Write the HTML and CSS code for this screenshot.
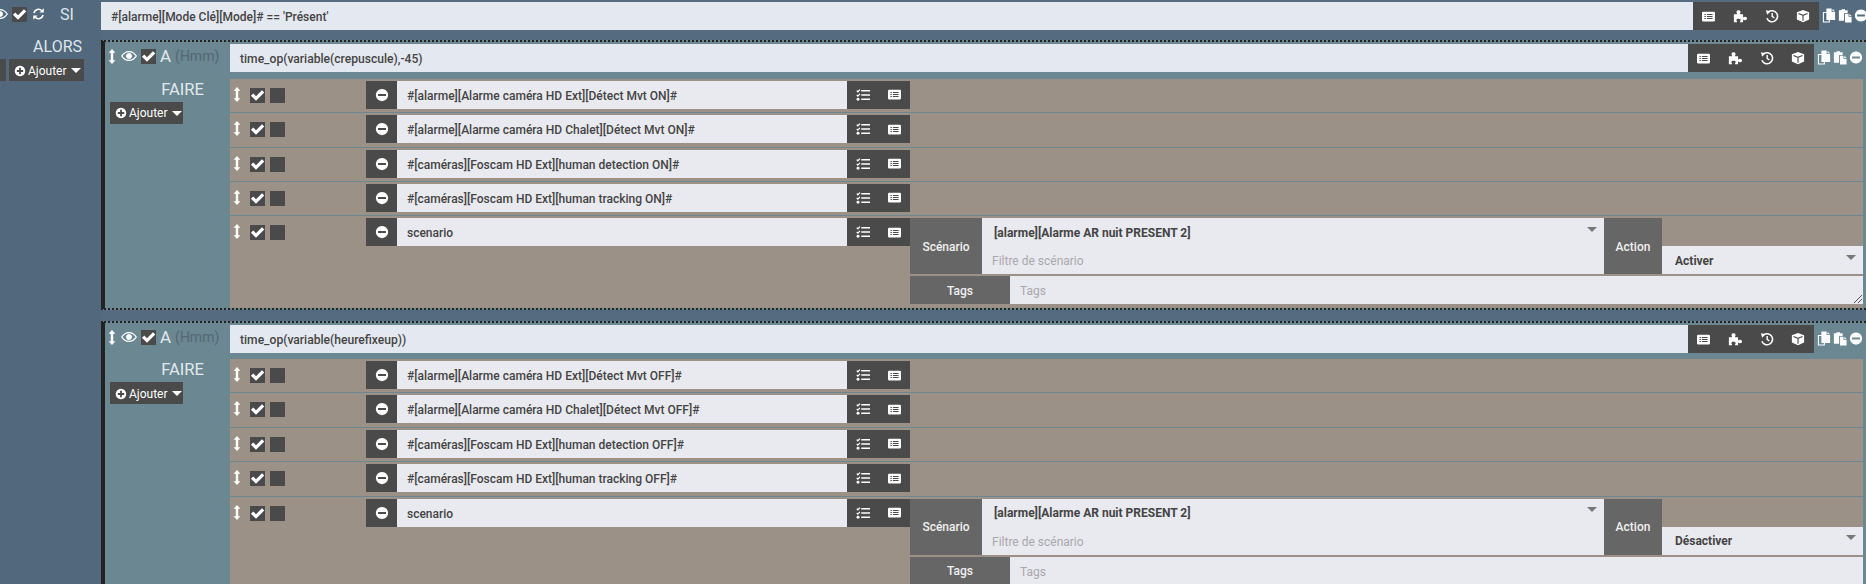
FILE: index.html
```html
<!DOCTYPE html>
<html lang="fr">
<head>
<meta charset="utf-8">
<title>Scénario</title>
<link rel="stylesheet" href="styles.css">
</head>
<body>
<svg class="sprite" xmlns="http://www.w3.org/2000/svg">
  <symbol id="i-check" viewBox="0 0 16 16"><path d="M1.800 8.200 4 6l2.600 2.600L12.200 3l2.200 2.200-7.800 7.800z"/></symbol>
  <symbol id="i-arrows" viewBox="0 0 8 16"><path d="M4 0l3.600 4H5.300v8h2.300L4 16 .4 12h2.300V4H.4z"/></symbol>
  <symbol id="i-eye" viewBox="0 0 16 16"><path fill-rule="evenodd" d="M8 3C4.600 3 1.800 5 0 8c1.800 3 4.600 5 8 5s6.200-2 8-5c-1.800-3-4.600-5-8-5zM8 4.200c2.800 0 5 1.600 6.600 3.800-1.600 2.200-3.800 3.800-6.600 3.800S3 10.200 1.400 8C3 5.800 5.200 4.200 8 4.200zM8 5a3 3 0 1 0 .01 0z"/></symbol>
  <symbol id="i-refresh" viewBox="0 0 16 16"><path d="M2.500 7A5.600 5.600 0 0 1 12.300 4.200" fill="none" stroke="currentColor" stroke-width="2"/><path d="M14.500 1v5.300H9.200z"/><path d="M13.500 9A5.600 5.600 0 0 1 3.700 11.800" fill="none" stroke="currentColor" stroke-width="2"/><path d="M1.500 15V9.700h5.300z"/></symbol>
  <symbol id="i-list" viewBox="0 0 16 16"><path fill-rule="evenodd" d="M1.500 2h13A1.500 1.500 0 0 1 16 3.500v9a1.500 1.500 0 0 1-1.500 1.500h-13A1.500 1.500 0 0 1 0 12.500v-9A1.500 1.500 0 0 1 1.500 2zM3 4.800v1.400h1.700V4.800zM6 4.800v1.400h7V4.800zM3 7.300v1.400h1.700V7.300zM6 7.300v1.400h7V7.300zM3 9.800v1.400h1.700V9.800zM6 9.800v1.400h7V9.800z"/></symbol>
  <symbol id="i-puzzle" viewBox="0 0 16 16"><path d="M1 6h3.600c.4-.8-.6-1.300-.6-2.700C4 2.200 5 1.500 6.300 1.500s2.300.7 2.300 1.800c0 1.400-1 1.900-.6 2.700h3.500v3.300c.8.400 1.300-.5 2.400-.5 1.200 0 2.100.9 2.100 2s-.9 2-2.100 2c-1.100 0-1.600-.9-2.400-.5V15H8c-.4-.8.700-1.200.7-2.400 0-1.100-1.100-1.600-2.400-1.600s-2.400.5-2.400 1.600c0 1.200 1.100 1.600.7 2.400H1z"/></symbol>
  <symbol id="i-history" viewBox="0 0 16 16"><path d="M4 3.400A6.300 6.300 0 1 1 2.200 10.600" fill="none" stroke="currentColor" stroke-width="1.800"/><path d="M1 1.500l5.200 1-3.700 4z"/><path d="M8.200 4.500v4l2.500 1.800" fill="none" stroke="currentColor" stroke-width="1.600"/></symbol>
  <symbol id="i-cube" viewBox="0 0 16 16"><path d="M8 1l7 2.700v8.400L8 15l-7-2.900V3.700z"/><path d="M2.800 5.200 8 7.300l5.200-2.100M8 7.300v6" fill="none" stroke="#4a4a4a" stroke-width="1.300"/></symbol>
  <symbol id="i-copy" viewBox="0 0 16 16"><path fill-rule="evenodd" d="M5 0h6v4h4v9H9V16H1V4h4zM2.200 5.200v9.600h5.600V13H5V5.200z"/><path d="M12 .5 15 3h-3z"/></symbol>
  <symbol id="i-paste" viewBox="0 0 16 16"><path d="M1 2h3V.8h4V2h3v3H7v9H1z"/><path d="M8 6h4v3.500h3.500V16H8z"/><path d="M13 6l2.500 2.500H13z"/></symbol>
  <symbol id="i-minus" viewBox="0 0 16 16"><path fill-rule="evenodd" d="M8 1a7 7 0 1 1-.01 0zM3.500 6.800v2.400h9V6.800z"/></symbol>
  <symbol id="i-plus" viewBox="0 0 16 16"><path fill-rule="evenodd" d="M8 1a7 7 0 1 1-.01 0zM6.800 3.800v3H3.800v2.400h3v3h2.400v-3h3V6.800h-3v-3z"/></symbol>
  <symbol id="i-tasks" viewBox="0 0 16 16"><path d="M6 2.200h10v1.800H6zM6 7.100h10v1.800H6zM6 12h10v1.800H6z"/><path d="M.8 3l1.300 1.300L4.500 1.800" fill="none" stroke="currentColor" stroke-width="1.400"/><path d="M.8 7.900l1.300 1.300 2.400-2.500" fill="none" stroke="currentColor" stroke-width="1.400"/><circle cx="2.300" cy="12.900" r="1.700"/></symbol>
</svg>

<div class="page">
  <aside class="sidebar">
    <div class="si-row">
      <svg class="ic ic-eye ic-eye-clip"><use href="#i-eye"/></svg>
      <span class="box"><svg class="ic ic-check"><use href="#i-check"/></svg></span>
      <svg class="ic ic-refresh"><use href="#i-refresh"/></svg>
      <span class="si-label">SI</span>
    </div>
    <div class="alors">ALORS</div>
    <div class="alors-actions">
      <span class="stub"></span>
      <button class="add"><svg class="ic ic-plus"><use href="#i-plus"/></svg>Ajouter<span class="caret"></span></button>
    </div>
  </aside>

  <main class="main">
    <div class="si-bar">
      <div class="cond">#[alarme][Mode Clé][Mode]# == 'Présent'</div>
      <div class="btns">
        <span class="btn"><svg class="ic ic-btn ic-list"><use href="#i-list"/></svg></span>
        <span class="btn"><svg class="ic ic-btn"><use href="#i-puzzle"/></svg></span>
        <span class="btn"><svg class="ic ic-btn"><use href="#i-history"/></svg></span>
        <span class="btn"><svg class="ic ic-btn"><use href="#i-cube"/></svg></span>
      </div>
      <div class="tools tools-si">
        <svg class="ic ic-tool"><use href="#i-copy"/></svg>
        <svg class="ic ic-tool"><use href="#i-paste"/></svg>
        <svg class="ic ic-tool"><use href="#i-minus"/></svg>
      </div>
    </div>

    <section class="block">
      <div class="block-head">
        <div class="head-left">
          <svg class="ic ic-arrows"><use href="#i-arrows"/></svg>
          <svg class="ic ic-eye"><use href="#i-eye"/></svg>
          <span class="box"><svg class="ic ic-check"><use href="#i-check"/></svg></span>
          <span class="a-label">A</span><span class="hmm">(Hmm)</span>
        </div>
        <div class="cond cond-block">time_op(variable(crepuscule),-45)</div>
        <div class="btns">
          <span class="btn"><svg class="ic ic-btn ic-list"><use href="#i-list"/></svg></span>
          <span class="btn"><svg class="ic ic-btn"><use href="#i-puzzle"/></svg></span>
          <span class="btn"><svg class="ic ic-btn"><use href="#i-history"/></svg></span>
          <span class="btn"><svg class="ic ic-btn"><use href="#i-cube"/></svg></span>
        </div>
        <div class="tools">
          <svg class="ic ic-tool"><use href="#i-copy"/></svg>
          <svg class="ic ic-tool"><use href="#i-paste"/></svg>
          <svg class="ic ic-tool"><use href="#i-minus"/></svg>
        </div>
      </div>
      <div class="block-body">
        <div class="faire-col">
          <div class="faire">FAIRE</div>
          <button class="add"><svg class="ic ic-plus"><use href="#i-plus"/></svg>Ajouter<span class="caret"></span></button>
        </div>
        <div class="actions">
          <div class="row">
            <svg class="ic ic-arrows"><use href="#i-arrows"/></svg>
            <span class="box"><svg class="ic ic-check"><use href="#i-check"/></svg></span><span class="box box-second"></span>
            <span class="del"><svg class="ic ic-del"><use href="#i-minus"/></svg></span>
            <div class="cmd">#[alarme][Alarme caméra HD Ext][Détect Mvt ON]#</div>
            <div class="cmd-btns"><span class="btn2"><svg class="ic ic-btn"><use href="#i-tasks"/></svg></span><span class="btn2"><svg class="ic ic-btn ic-list"><use href="#i-list"/></svg></span></div>
          </div>
          <div class="row">
            <svg class="ic ic-arrows"><use href="#i-arrows"/></svg>
            <span class="box"><svg class="ic ic-check"><use href="#i-check"/></svg></span><span class="box box-second"></span>
            <span class="del"><svg class="ic ic-del"><use href="#i-minus"/></svg></span>
            <div class="cmd">#[alarme][Alarme caméra HD Chalet][Détect Mvt ON]#</div>
            <div class="cmd-btns"><span class="btn2"><svg class="ic ic-btn"><use href="#i-tasks"/></svg></span><span class="btn2"><svg class="ic ic-btn ic-list"><use href="#i-list"/></svg></span></div>
          </div>
          <div class="row">
            <svg class="ic ic-arrows"><use href="#i-arrows"/></svg>
            <span class="box"><svg class="ic ic-check"><use href="#i-check"/></svg></span><span class="box box-second"></span>
            <span class="del"><svg class="ic ic-del"><use href="#i-minus"/></svg></span>
            <div class="cmd">#[caméras][Foscam HD Ext][human detection ON]#</div>
            <div class="cmd-btns"><span class="btn2"><svg class="ic ic-btn"><use href="#i-tasks"/></svg></span><span class="btn2"><svg class="ic ic-btn ic-list"><use href="#i-list"/></svg></span></div>
          </div>
          <div class="row">
            <svg class="ic ic-arrows"><use href="#i-arrows"/></svg>
            <span class="box"><svg class="ic ic-check"><use href="#i-check"/></svg></span><span class="box box-second"></span>
            <span class="del"><svg class="ic ic-del"><use href="#i-minus"/></svg></span>
            <div class="cmd">#[caméras][Foscam HD Ext][human tracking ON]#</div>
            <div class="cmd-btns"><span class="btn2"><svg class="ic ic-btn"><use href="#i-tasks"/></svg></span><span class="btn2"><svg class="ic ic-btn ic-list"><use href="#i-list"/></svg></span></div>
          </div>
          <div class="row row-last">
            <svg class="ic ic-arrows"><use href="#i-arrows"/></svg>
            <span class="box"><svg class="ic ic-check"><use href="#i-check"/></svg></span><span class="box box-second"></span>
            <span class="del"><svg class="ic ic-del"><use href="#i-minus"/></svg></span>
            <div class="cmd">scenario</div>
            <div class="cmd-btns"><span class="btn2"><svg class="ic ic-btn"><use href="#i-tasks"/></svg></span><span class="btn2"><svg class="ic ic-btn ic-list"><use href="#i-list"/></svg></span></div>
            <div class="options">
              <div class="opt-line">
                <div class="opt-label opt-scen">Scénario</div>
                <div class="opt-value">
                  <div class="select"><b>[alarme][Alarme AR nuit PRESENT 2]</b><span class="caret caret-gray"></span></div>
                  <div class="placeholder">Filtre de scénario</div>
                </div>
                <div class="opt-label opt-action">Action</div>
                <div class="opt-action-value">
                  <div class="select select-action"><b>Activer</b><span class="caret caret-gray"></span></div>
                </div>
              </div>
              <div class="opt-line opt-tags">
                <div class="opt-label opt-tag-label">Tags</div>
                <div class="placeholder tags-input">Tags<svg class="grip" viewBox="0 0 8 8"><path d="M0 8 8 0M4 8l4-4" stroke="#555" stroke-width="1" fill="none"/></svg></div>
              </div>
            </div>
          </div>
        </div>
      </div>
    </section>

    <section class="block block-two">
      <div class="block-head">
        <div class="head-left">
          <svg class="ic ic-arrows"><use href="#i-arrows"/></svg>
          <svg class="ic ic-eye"><use href="#i-eye"/></svg>
          <span class="box"><svg class="ic ic-check"><use href="#i-check"/></svg></span>
          <span class="a-label">A</span><span class="hmm">(Hmm)</span>
        </div>
        <div class="cond cond-block">time_op(variable(heurefixeup))</div>
        <div class="btns">
          <span class="btn"><svg class="ic ic-btn ic-list"><use href="#i-list"/></svg></span>
          <span class="btn"><svg class="ic ic-btn"><use href="#i-puzzle"/></svg></span>
          <span class="btn"><svg class="ic ic-btn"><use href="#i-history"/></svg></span>
          <span class="btn"><svg class="ic ic-btn"><use href="#i-cube"/></svg></span>
        </div>
        <div class="tools">
          <svg class="ic ic-tool"><use href="#i-copy"/></svg>
          <svg class="ic ic-tool"><use href="#i-paste"/></svg>
          <svg class="ic ic-tool"><use href="#i-minus"/></svg>
        </div>
      </div>
      <div class="block-body">
        <div class="faire-col">
          <div class="faire">FAIRE</div>
          <button class="add"><svg class="ic ic-plus"><use href="#i-plus"/></svg>Ajouter<span class="caret"></span></button>
        </div>
        <div class="actions">
          <div class="row">
            <svg class="ic ic-arrows"><use href="#i-arrows"/></svg>
            <span class="box"><svg class="ic ic-check"><use href="#i-check"/></svg></span><span class="box box-second"></span>
            <span class="del"><svg class="ic ic-del"><use href="#i-minus"/></svg></span>
            <div class="cmd">#[alarme][Alarme caméra HD Ext][Détect Mvt OFF]#</div>
            <div class="cmd-btns"><span class="btn2"><svg class="ic ic-btn"><use href="#i-tasks"/></svg></span><span class="btn2"><svg class="ic ic-btn ic-list"><use href="#i-list"/></svg></span></div>
          </div>
          <div class="row">
            <svg class="ic ic-arrows"><use href="#i-arrows"/></svg>
            <span class="box"><svg class="ic ic-check"><use href="#i-check"/></svg></span><span class="box box-second"></span>
            <span class="del"><svg class="ic ic-del"><use href="#i-minus"/></svg></span>
            <div class="cmd">#[alarme][Alarme caméra HD Chalet][Détect Mvt OFF]#</div>
            <div class="cmd-btns"><span class="btn2"><svg class="ic ic-btn"><use href="#i-tasks"/></svg></span><span class="btn2"><svg class="ic ic-btn ic-list"><use href="#i-list"/></svg></span></div>
          </div>
          <div class="row">
            <svg class="ic ic-arrows"><use href="#i-arrows"/></svg>
            <span class="box"><svg class="ic ic-check"><use href="#i-check"/></svg></span><span class="box box-second"></span>
            <span class="del"><svg class="ic ic-del"><use href="#i-minus"/></svg></span>
            <div class="cmd">#[caméras][Foscam HD Ext][human detection OFF]#</div>
            <div class="cmd-btns"><span class="btn2"><svg class="ic ic-btn"><use href="#i-tasks"/></svg></span><span class="btn2"><svg class="ic ic-btn ic-list"><use href="#i-list"/></svg></span></div>
          </div>
          <div class="row">
            <svg class="ic ic-arrows"><use href="#i-arrows"/></svg>
            <span class="box"><svg class="ic ic-check"><use href="#i-check"/></svg></span><span class="box box-second"></span>
            <span class="del"><svg class="ic ic-del"><use href="#i-minus"/></svg></span>
            <div class="cmd">#[caméras][Foscam HD Ext][human tracking OFF]#</div>
            <div class="cmd-btns"><span class="btn2"><svg class="ic ic-btn"><use href="#i-tasks"/></svg></span><span class="btn2"><svg class="ic ic-btn ic-list"><use href="#i-list"/></svg></span></div>
          </div>
          <div class="row row-last">
            <svg class="ic ic-arrows"><use href="#i-arrows"/></svg>
            <span class="box"><svg class="ic ic-check"><use href="#i-check"/></svg></span><span class="box box-second"></span>
            <span class="del"><svg class="ic ic-del"><use href="#i-minus"/></svg></span>
            <div class="cmd">scenario</div>
            <div class="cmd-btns"><span class="btn2"><svg class="ic ic-btn"><use href="#i-tasks"/></svg></span><span class="btn2"><svg class="ic ic-btn ic-list"><use href="#i-list"/></svg></span></div>
            <div class="options">
              <div class="opt-line">
                <div class="opt-label opt-scen">Scénario</div>
                <div class="opt-value">
                  <div class="select"><b>[alarme][Alarme AR nuit PRESENT 2]</b><span class="caret caret-gray"></span></div>
                  <div class="placeholder">Filtre de scénario</div>
                </div>
                <div class="opt-label opt-action">Action</div>
                <div class="opt-action-value">
                  <div class="select select-action"><b>Désactiver</b><span class="caret caret-gray"></span></div>
                </div>
              </div>
              <div class="opt-line opt-tags">
                <div class="opt-label opt-tag-label">Tags</div>
                <div class="placeholder tags-input">Tags</div>
              </div>
            </div>
          </div>
        </div>
      </div>
    </section>
  </main>
</div>
</body>
</html>
```

FILE: styles.css
```css
* { box-sizing: border-box; }
html, body { margin: 0; padding: 0; height: 584px; overflow: hidden; }
body {
  font-family: Roboto, "Liberation Sans", sans-serif;
  font-size: 12px;
  color: #444;
  background: #556c80;
}
.sprite { display: none; }
.page { display: flex; height: 584px; overflow: hidden; }

/* icons */
.ic { display: block; fill: #fff; color: #fff; flex: none; }
.ic-arrows { width: 8px; height: 15px; }
.ic-eye { width: 16px; height: 16px; }
.ic-check { width: 17px; height: 17px; }
.ic-refresh { width: 13px; height: 14px; }
.ic-plus { width: 12px; height: 12px; }
.ic-btn { width: 14px; height: 14px; }
.ic-list { width: 13px; height: 13px; }
.ic-tool { width: 14px; height: 15px; }
.ic-del { width: 14px; height: 14px; }

.box {
  width: 15px; height: 15px;
  background: #4a4a4a;
  display: flex; align-items: center; justify-content: center;
  flex: none;
}

/* sidebar */
.sidebar { width: 101px; flex: none; background: #52687c; }
.si-row { display: flex; align-items: center; height: 30px; padding-bottom: 2px; margin-left: -8px; }
.ic-eye-clip { margin-right: 4px; }
.si-row .box { margin-right: 5px; }
.si-label { margin-left: 15px; font-size: 16px; color: #dfe6ec; }
.alors { margin-top: 7px; text-align: right; padding-right: 19px; font-size: 16px; color: #dfe6ec; height: 22px; line-height: 19px; }
.alors-actions { display: flex; gap: 3px; }
.stub { width: 6px; height: 22px; background: #4a4a4a; }

.add {
  display: inline-flex; align-items: center;
  height: 22px; width: 73px;
  padding: 1px 0 0 5px;
  border: 0;
  background: #4a4a4a;
  color: #fff;
  font: 12px Roboto, sans-serif;
}
.alors-actions .add { width: 75px; }
.add .ic-plus { margin-right: 2px; }
.caret {
  width: 0; height: 0;
  border-left: 5px solid transparent;
  border-right: 5px solid transparent;
  border-top: 5px solid #fff;
  margin-left: 4px;
}
.caret-gray { border-top-color: #777; margin-left: auto; margin-top: -7px; }

/* main */
.main { flex: 1; min-width: 0; }
.si-bar { display: flex; padding-top: 2px; height: 40px; }
.cond {
  flex: 1;
  height: 28px; line-height: 30px;
  background: #e4e8f0;
  padding-left: 10px;
  font-weight: 500;
  color: #444;
}
.cond-block { font-size: 12.1px; }
.btns { display: flex; width: 126px; height: 28px; background: #4a4a4a; flex: none; }
.btn { flex: 1; display: flex; align-items: center; justify-content: center; }
.tools { display: flex; width: 52px; flex: none; gap: 2px; padding: 6px 0 0 3px; }
.tools-si { width: 47px; }

/* block */
.block {
  background: #6a8792;
  border-top: 2px dotted #222;
  border-bottom: 2px dotted #222;
  border-left: 4px solid #222;
  height: 270px;
  padding-top: 2px;
  margin-bottom: 11px;
}
.block-head { display: flex; height: 28px; }
.head-left { width: 125px; flex: none; display: flex; align-items: center; padding-left: 3px; height: 24px; }
.head-left .ic-arrows { margin-right: 5px; }
.head-left .ic-eye { margin-right: 4px; }
.a-label { margin-left: 4px; font-size: 17px; color: #e3e8ec; }
.hmm { margin-left: 4px; font-size: 14px; color: #566871; }

.block-body { display: flex; padding-top: 6.8px; }
.block-two .block-body { padding-top: 6px; }
.faire-col { width: 125px; flex: none; padding: 0 0 0 5px; }
.faire { text-align: center; width: 100%; padding-left: 25px; margin-top: 1px; height: 22px; line-height: 20px; font-size: 16.5px; color: #e3e8ec; }

.actions { flex: 1; padding-right: 3px; background: #6a8792; }
.row {
  display: flex;
  height: 34.4px;
  padding: 2px 0 0 3px;
  background: #9b9186;
  border-bottom: 1px solid #6a8792;
}
.row-last { height: auto; border-bottom: 0; padding-bottom: 4px; }
.row .ic-arrows { margin-top: 6px; margin-right: 9px; }
.row .box { margin-top: 7px; margin-right: 5px; }
.row .box-second { margin-right: 0; }
.del { width: 31px; height: 28px; margin-left: 81px; background: #4a4a4a; display: flex; align-items: center; justify-content: center; flex: none; }
.cmd { width: 450px; height: 28px; line-height: 30px; padding-left: 10px; background: #e9eaef; font-weight: 500; color: #444; flex: none; }
.cmd-btns { width: 63px; height: 28px; background: #4a4a4a; display: flex; flex: none; }
.btn2 { flex: 1; display: flex; align-items: center; justify-content: center; }

/* scenario options */
.options { flex: 1; min-width: 0; }
.opt-line { display: flex; height: 56px; }
.opt-tags { height: 28px; margin-top: 2px; }
.opt-label {
  background: #666;
  color: #f0f0f0;
  font-weight: 500;
  padding-top: 1px;
  display: flex; align-items: center; justify-content: center;
  flex: none;
}
.opt-scen { width: 72px; }
.opt-action { width: 58px; }
.opt-tag-label { width: 100px; }
.opt-value { flex: 1; background: #e9eaef; }
.select { display: flex; align-items: center; height: 28px; padding: 1px 7px 0 12px; font-weight: 500; color: #444; }
.select b { font-weight: 700; }
.opt-action-value { width: 201px; flex: none; padding-top: 28px; }
.select-action { background: #e9eaef; padding-left: 13px; }
.placeholder { height: 28px; line-height: 30px; padding-left: 10px; color: #a8a8ac; background: #e9eaef; }
.tags-input { flex: 1; position: relative; }
.grip { position: absolute; right: 1px; bottom: 1px; width: 8px; height: 8px; }
```
